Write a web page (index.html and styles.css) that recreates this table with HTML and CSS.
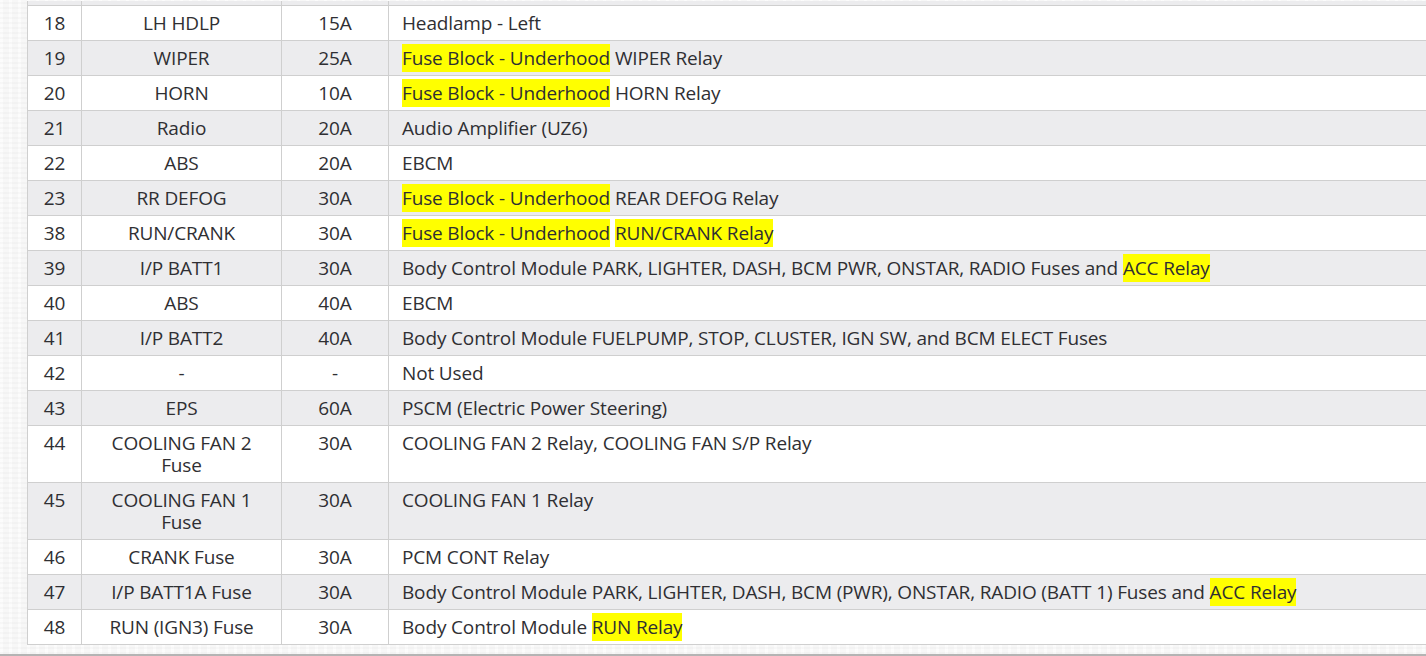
FILE: index.html
```html
<!DOCTYPE html>
<html lang="en">
<head>
<meta charset="utf-8">
<title>Fuse Block</title>
<link rel="stylesheet" href="styles.css">
</head>
<body>
<div class="page">
  <table class="fuses">
    <colgroup>
      <col class="c-num">
      <col class="c-name">
      <col class="c-amp">
      <col class="c-desc">
    </colgroup>
    <tbody>
      <tr class="stub"><td></td><td></td><td></td><td></td></tr>
      <tr><td>18</td><td>LH HDLP</td><td>15A</td><td class="desc">Headlamp - Left</td></tr>
      <tr><td>19</td><td>WIPER</td><td>25A</td><td class="desc"><span class="hl">Fuse Block - Underhood</span> WIPER Relay</td></tr>
      <tr><td>20</td><td>HORN</td><td>10A</td><td class="desc"><span class="hl">Fuse Block - Underhood</span> HORN Relay</td></tr>
      <tr><td>21</td><td>Radio</td><td>20A</td><td class="desc">Audio Amplifier (UZ6)</td></tr>
      <tr><td>22</td><td>ABS</td><td>20A</td><td class="desc">EBCM</td></tr>
      <tr><td>23</td><td>RR DEFOG</td><td>30A</td><td class="desc"><span class="hl">Fuse Block - Underhood</span> REAR DEFOG Relay</td></tr>
      <tr><td>38</td><td>RUN/CRANK</td><td>30A</td><td class="desc"><span class="hl">Fuse Block - Underhood</span> <span class="hl">RUN/CRANK Relay</span></td></tr>
      <tr><td>39</td><td>I/P BATT1</td><td>30A</td><td class="desc">Body Control Module PARK, LIGHTER, DASH, BCM PWR, ONSTAR, RADIO Fuses and <span class="hl">ACC Relay</span></td></tr>
      <tr><td>40</td><td>ABS</td><td>40A</td><td class="desc">EBCM</td></tr>
      <tr><td>41</td><td>I/P BATT2</td><td>40A</td><td class="desc">Body Control Module FUELPUMP, STOP, CLUSTER, IGN SW, and BCM ELECT Fuses</td></tr>
      <tr><td>42</td><td>-</td><td>-</td><td class="desc">Not Used</td></tr>
      <tr><td>43</td><td>EPS</td><td>60A</td><td class="desc">PSCM (Electric Power Steering)</td></tr>
      <tr><td>44</td><td>COOLING FAN 2 Fuse</td><td>30A</td><td class="desc">COOLING FAN 2 Relay, COOLING FAN S/P Relay</td></tr>
      <tr><td>45</td><td>COOLING FAN 1 Fuse</td><td>30A</td><td class="desc">COOLING FAN 1 Relay</td></tr>
      <tr><td>46</td><td>CRANK Fuse</td><td>30A</td><td class="desc">PCM CONT Relay</td></tr>
      <tr><td>47</td><td>I/P BATT1A Fuse</td><td>30A</td><td class="desc">Body Control Module PARK, LIGHTER, DASH, BCM (PWR), ONSTAR, RADIO (BATT 1) Fuses and <span class="hl">ACC Relay</span></td></tr>
      <tr><td>48</td><td>RUN (IGN3) Fuse</td><td>30A</td><td class="desc">Body Control Module <span class="hl">RUN Relay</span></td></tr>
    </tbody>
  </table>
</div>
</body>
</html>
```

FILE: styles.css
```css
html, body {
  margin: 0;
  padding: 0;
  overflow: hidden;
}

body {
  width: 1426px;
  height: 656px;
  background: #f6f6f6;
  font-family: "Open Sans", "Noto Sans", sans-serif;
}

.page {
  box-sizing: border-box;
  height: 656px;
  padding: 0 0 9px 27px;
  background-color: #f7f7f7;
  background-image:
    repeating-linear-gradient(0deg, rgba(0,0,0,0.018) 0 2px, transparent 2px 5px),
    repeating-linear-gradient(90deg, rgba(255,255,255,0.6) 0 3px, transparent 3px 9px);
  border-bottom: 2px solid #b4b4b4;
  display: flex;
  flex-direction: column;
  justify-content: flex-end;
}

.fuses {
  border-collapse: collapse;
  table-layout: fixed;
  width: 1440px;
  background: #ffffff;
  color: #2f2f33;
  font-size: 19px;
  letter-spacing: -0.15px;
  line-height: 22px;
}

.c-num { width: 54px; }
.c-name { width: 200px; }
.c-amp { width: 107px; }
.c-desc { width: 1079px; }

.fuses td {
  border: 1px solid #cfcfcf;
  padding: 6px 8px;
  text-align: center;
  vertical-align: top;
  white-space: normal;
}

.fuses td.desc {
  text-align: left;
  padding-left: 13px;
  white-space: nowrap;
}

.fuses tr:nth-child(odd) td {
  background: #ececee;
}

.fuses tr.stub td {
  padding: 0;
  height: 4px;
  border-top: none;
}

.hl {
  background: #ffff00;
  padding: 1px 0;
}
```
